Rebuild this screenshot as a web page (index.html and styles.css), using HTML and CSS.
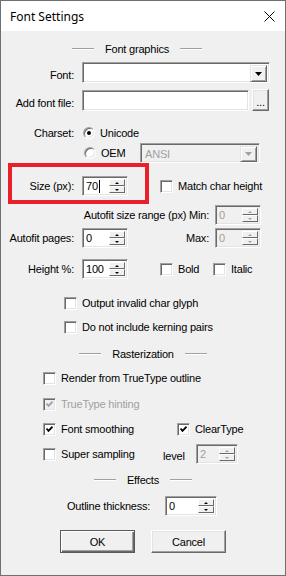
FILE: index.html
```html
<!DOCTYPE html>
<html lang="en">
<head>
    <meta charset="UTF-8">
    <title>Font Settings</title>
    <link rel="stylesheet" href="styles.css">
</head>
<body>

<div class="window">
    <div class="titlebar">
        <span class="title">Font Settings</span>
        <svg class="close" width="11" height="11" viewBox="0 0 11 11"><path d="M0.5 0.5L10.5 10.5M10.5 0.5L0.5 10.5" stroke="#000" stroke-width="1"/></svg>
    </div>

    <div class="body">
        <div class="group-title gt-font"><span class="line"></span><span>Font graphics</span><span class="line"></span></div>

        <div class="row r-font">
            <span class="lbl low">Font:</span>
            <div class="combo font-combo">
                <div class="combo-btn"><svg width="7" height="4" viewBox="0 0 7 4"><path d="M0 0h7L3.5 4z"/></svg></div>
            </div>
        </div>

        <div class="row r-file">
            <span class="lbl low">Add font file:</span>
            <div class="edit file-edit"></div>
            <div class="btn dots">...</div>
        </div>

        <div class="row r-charset">
            <span class="lbl">Charset:</span>
            <div class="opt unicode"><span class="radio on"></span><span>Unicode</span></div>
        </div>

        <div class="row r-oem">
            <div class="opt oem"><span class="radio"></span><span>OEM</span></div>
            <div class="combo ansi disabled">
                <span class="combo-text">ANSI</span>
                <div class="combo-btn"><svg width="7" height="4" viewBox="0 0 7 4"><path d="M0 0h7L3.5 4z" fill="#a0a0a0"/></svg></div>
            </div>
        </div>

        <div class="row r-size">
            <div class="highlight"></div>
            <span class="lbl">Size (px):</span>
            <div class="edit spin">
                <span class="val">70<span class="caret"></span></span>
                <div class="spin-btns"><span class="sbtn up"></span><span class="sbtn down"></span></div>
            </div>
            <div class="opt match"><span class="cb"></span><span>Match char height</span></div>
        </div>

        <div class="row r-min">
            <span class="rlbl">Autofit size range (px) Min:</span>
            <div class="edit spin disabled">
                <span class="val">0</span>
                <div class="spin-btns"><span class="sbtn up"></span><span class="sbtn down"></span></div>
            </div>
        </div>

        <div class="row r-pages">
            <span class="lbl">Autofit pages:</span>
            <div class="edit spin">
                <span class="val">0</span>
                <div class="spin-btns"><span class="sbtn up"></span><span class="sbtn down"></span></div>
            </div>
            <span class="rlbl max">Max:</span>
            <div class="edit spin disabled">
                <span class="val">0</span>
                <div class="spin-btns"><span class="sbtn up"></span><span class="sbtn down"></span></div>
            </div>
        </div>

        <div class="row r-height">
            <span class="lbl">Height %:</span>
            <div class="edit spin">
                <span class="val">100</span>
                <div class="spin-btns"><span class="sbtn up"></span><span class="sbtn down"></span></div>
            </div>
            <div class="opt bold"><span class="cb"></span><span>Bold</span></div>
            <div class="opt"><span class="cb"></span><span>Italic</span></div>
        </div>

        <div class="row r-invalid indent2">
            <div class="opt"><span class="cb"></span><span>Output invalid char glyph</span></div>
        </div>

        <div class="row r-kerning indent2">
            <div class="opt"><span class="cb"></span><span>Do not include kerning pairs</span></div>
        </div>

        <div class="group-title gt-raster"><span class="line"></span><span>Rasterization</span><span class="line"></span></div>

        <div class="row r-render indent1">
            <div class="opt"><span class="cb"></span><span>Render from TrueType outline</span></div>
        </div>

        <div class="row r-hinting indent1">
            <div class="opt disabled"><span class="cb checked"><svg width="7" height="7" viewBox="0 0 7 7"><polyline points="0.5,2.5 2.5,4.8 6.5,0.7" fill="none" stroke="#a0a0a0" stroke-width="1.8"/></svg></span><span>TrueType hinting</span></div>
        </div>

        <div class="row r-smooth indent1">
            <div class="opt smooth"><span class="cb checked"><svg width="7" height="7" viewBox="0 0 7 7"><polyline points="0.5,2.5 2.5,4.8 6.5,0.7" fill="none" stroke="#000" stroke-width="1.8"/></svg></span><span>Font smoothing</span></div>
            <div class="opt"><span class="cb checked"><svg width="7" height="7" viewBox="0 0 7 7"><polyline points="0.5,2.5 2.5,4.8 6.5,0.7" fill="none" stroke="#000" stroke-width="1.8"/></svg></span><span>ClearType</span></div>
        </div>

        <div class="row r-super indent1">
            <div class="opt super"><span class="cb"></span><span>Super sampling</span></div>
            <span class="level">level</span>
            <div class="edit spin small disabled">
                <span class="val">2</span>
                <div class="spin-btns"><span class="sbtn up"></span><span class="sbtn down"></span></div>
            </div>
        </div>

        <div class="group-title gt-effects"><span class="line"></span><span>Effects</span><span class="line"></span></div>

        <div class="row r-outline">
            <span class="olbl">Outline thickness:</span>
            <div class="edit spin wide">
                <span class="val">0</span>
                <div class="spin-btns"><span class="sbtn up"></span><span class="sbtn down"></span></div>
            </div>
        </div>

        <div class="row r-buttons">
            <div class="btn push default">OK</div>
            <div class="btn push">Cancel</div>
        </div>
    </div>
</div>

</body>
</html>
```

FILE: styles.css
```css
* { margin: 0; padding: 0; box-sizing: border-box; }
body { width: 286px; height: 576px; overflow: hidden; background: #f0f0f0; color: #000; font-family: "Liberation Sans", Arial, sans-serif; font-size: 11px; letter-spacing: -0.2px; }

.window { width: 286px; height: 576px; border: 1px solid #707070; background: #f0f0f0; display: flex; flex-direction: column; }
.titlebar { height: 30px; flex: none; background: #fff; display: flex; align-items: center; justify-content: space-between; padding: 0 10px 0 9px; font-family: "Noto Sans", sans-serif; font-size: 12px; letter-spacing: 0; }
.close { display: block; }

.body { display: flex; flex-direction: column; }
.row { display: flex; align-items: center; height: 20px; }
.lbl { width: 73px; margin-right: 8px; text-align: right; flex: none; white-space: nowrap; }
.lbl.low { padding-top: 5px; }

/* group headers */
.group-title { display: flex; align-items: center; justify-content: center; gap: 11px; height: 16px; }
.group-title .line { width: 22px; height: 2px; border-top: 1px solid #a0a0a0; border-bottom: 1px solid #fff; }
.gt-font { margin-top: 10px; padding-right: 12px; }
.gt-raster { margin-top: 11px; }
.gt-effects { margin-top: 8px; }

/* sunken fields */
.edit, .combo { background: #fff; border: 1px solid; border-color: #a0a0a0 #fff #fff #a0a0a0; box-shadow: inset 1px 1px #696969, inset -1px -1px #e3e3e3; display: flex; flex: none; }
.disabled.edit, .disabled.combo { background: #f0f0f0; color: #a0a0a0; }

.combo { height: 21px; justify-content: space-between; padding: 2px; }
.font-combo { width: 188px; justify-content: flex-end; }
.combo-btn { width: 17px; height: 17px; background: #f0f0f0; border: 1px solid; border-color: #e3e3e3 #696969 #696969 #e3e3e3; box-shadow: inset 1px 1px #fff, inset -1px -1px #a0a0a0; display: flex; align-items: center; justify-content: center; }
.combo-btn svg { display: block; }
.ansi { width: 120px; height: 20px; margin-left: 0; }
.ansi .combo-btn { height: 16px; }
.combo-text { padding-left: 2px; line-height: 16px; }

.file-edit { width: 167px; height: 21px; }
.btn { background: #f0f0f0; border: 1px solid; border-color: #fff #696969 #696969 #fff; box-shadow: inset -1px -1px #a0a0a0, inset 1px 1px #e3e3e3; display: flex; align-items: center; justify-content: center; flex: none; }
.dots { width: 17px; height: 22px; margin-left: 3px; margin-top: -1px; padding-top: 4px; }

/* spin edits */
.spin { width: 46px; height: 20px; padding: 2px; }
.spin.small { width: 42px; }
.spin.wide { width: 52px; }
.spin .val { flex: 1; display: flex; align-items: center; padding-left: 1px; line-height: 16px; }
.caret { width: 1px; height: 13px; background: #000; margin-left: 1px; }
.spin-btns { width: 16px; display: flex; flex-direction: column; }
.sbtn { flex: 1; background: #f0f0f0; border: 1px solid; border-color: #fff #696969 #696969 #fff; display: flex; align-items: center; justify-content: center; }
.sbtn::after { content: ""; width: 0; height: 0; border-left: 2px solid transparent; border-right: 2px solid transparent; }
.up::after { border-bottom: 2px solid #000; }
.down::after { border-top: 2px solid #000; }
.disabled .up::after { border-bottom-color: #a0a0a0; }
.disabled .down::after { border-top-color: #a0a0a0; }

/* radios and checkboxes */
.opt { display: flex; align-items: center; flex: none; white-space: nowrap; }
.opt.disabled { color: #a0a0a0; }
.radio { width: 12px; height: 12px; border-radius: 50%; background: #fff; border: 1px solid; border-color: #a0a0a0 #fff #fff #a0a0a0; box-shadow: inset 1px 1px #696969, inset -1px -1px #e3e3e3; margin: 0 5px 0 1px; display: flex; align-items: center; justify-content: center; }
.radio.on::after { content: ""; width: 4px; height: 4px; border-radius: 50%; background: #000; }
.cb { width: 13px; height: 13px; flex: none; background: #fff; border: 1px solid; border-color: #a0a0a0 #fff #fff #a0a0a0; box-shadow: inset 1px 1px #696969, inset -1px -1px #e3e3e3; margin-right: 5px; display: flex; align-items: center; justify-content: center; }
.disabled .cb { background: #f0f0f0; }
.cb svg { display: block; }

/* rows */
.r-font { height: 21px; margin-top: 5px; }
.r-file { height: 21px; margin-top: 7px; }
.r-charset { height: 16px; margin-top: 14px; }
.r-oem { margin-top: 2px; padding-left: 82px; }
.oem { width: 57px; margin-left: 0; }
.oem .radio { margin-left: 1px; }
.r-size { position: relative; margin-top: 13px; }
.highlight { position: absolute; left: 7px; top: -13px; width: 141px; height: 41px; border: 4px solid #e8202a; }
.match { margin-left: 32px; }
.r-min { margin-top: 9px; justify-content: flex-end; padding-right: 24px; }
.rlbl { margin-right: 6px; white-space: nowrap; }
.r-pages { margin-top: 3px; padding-right: 24px; }
.max { margin-left: auto; }
.r-height { margin-top: 11px; }
.r-height .bold { margin-left: 32px; width: 53px; }
.indent2 { padding-left: 63px; height: 16px; }
.indent1 { padding-left: 42px; height: 16px; }
.r-invalid { margin-top: 16px; }
.r-kerning { margin-top: 8px; }
.r-render { margin-top: 8px; }
.r-hinting { margin-top: 10px; }
.r-smooth { margin-top: 9px; }
.smooth { width: 134px; }
.r-super { height: 20px; margin-top: 7px; }
.super { width: 120px; }
.level { width: 33px; padding-top: 3px; }
.r-outline { margin-top: 8px; padding-left: 66px; }
.olbl { width: 98px; }
.r-buttons { margin-top: 14px; height: 23px; justify-content: center; gap: 16px; }
.push { width: 75px; height: 23px; }
.push.default { border-color: #5a5a5a; box-shadow: inset 1px 1px #fff, inset -1px -1px #696969, inset -2px -2px #a0a0a0; }
```
